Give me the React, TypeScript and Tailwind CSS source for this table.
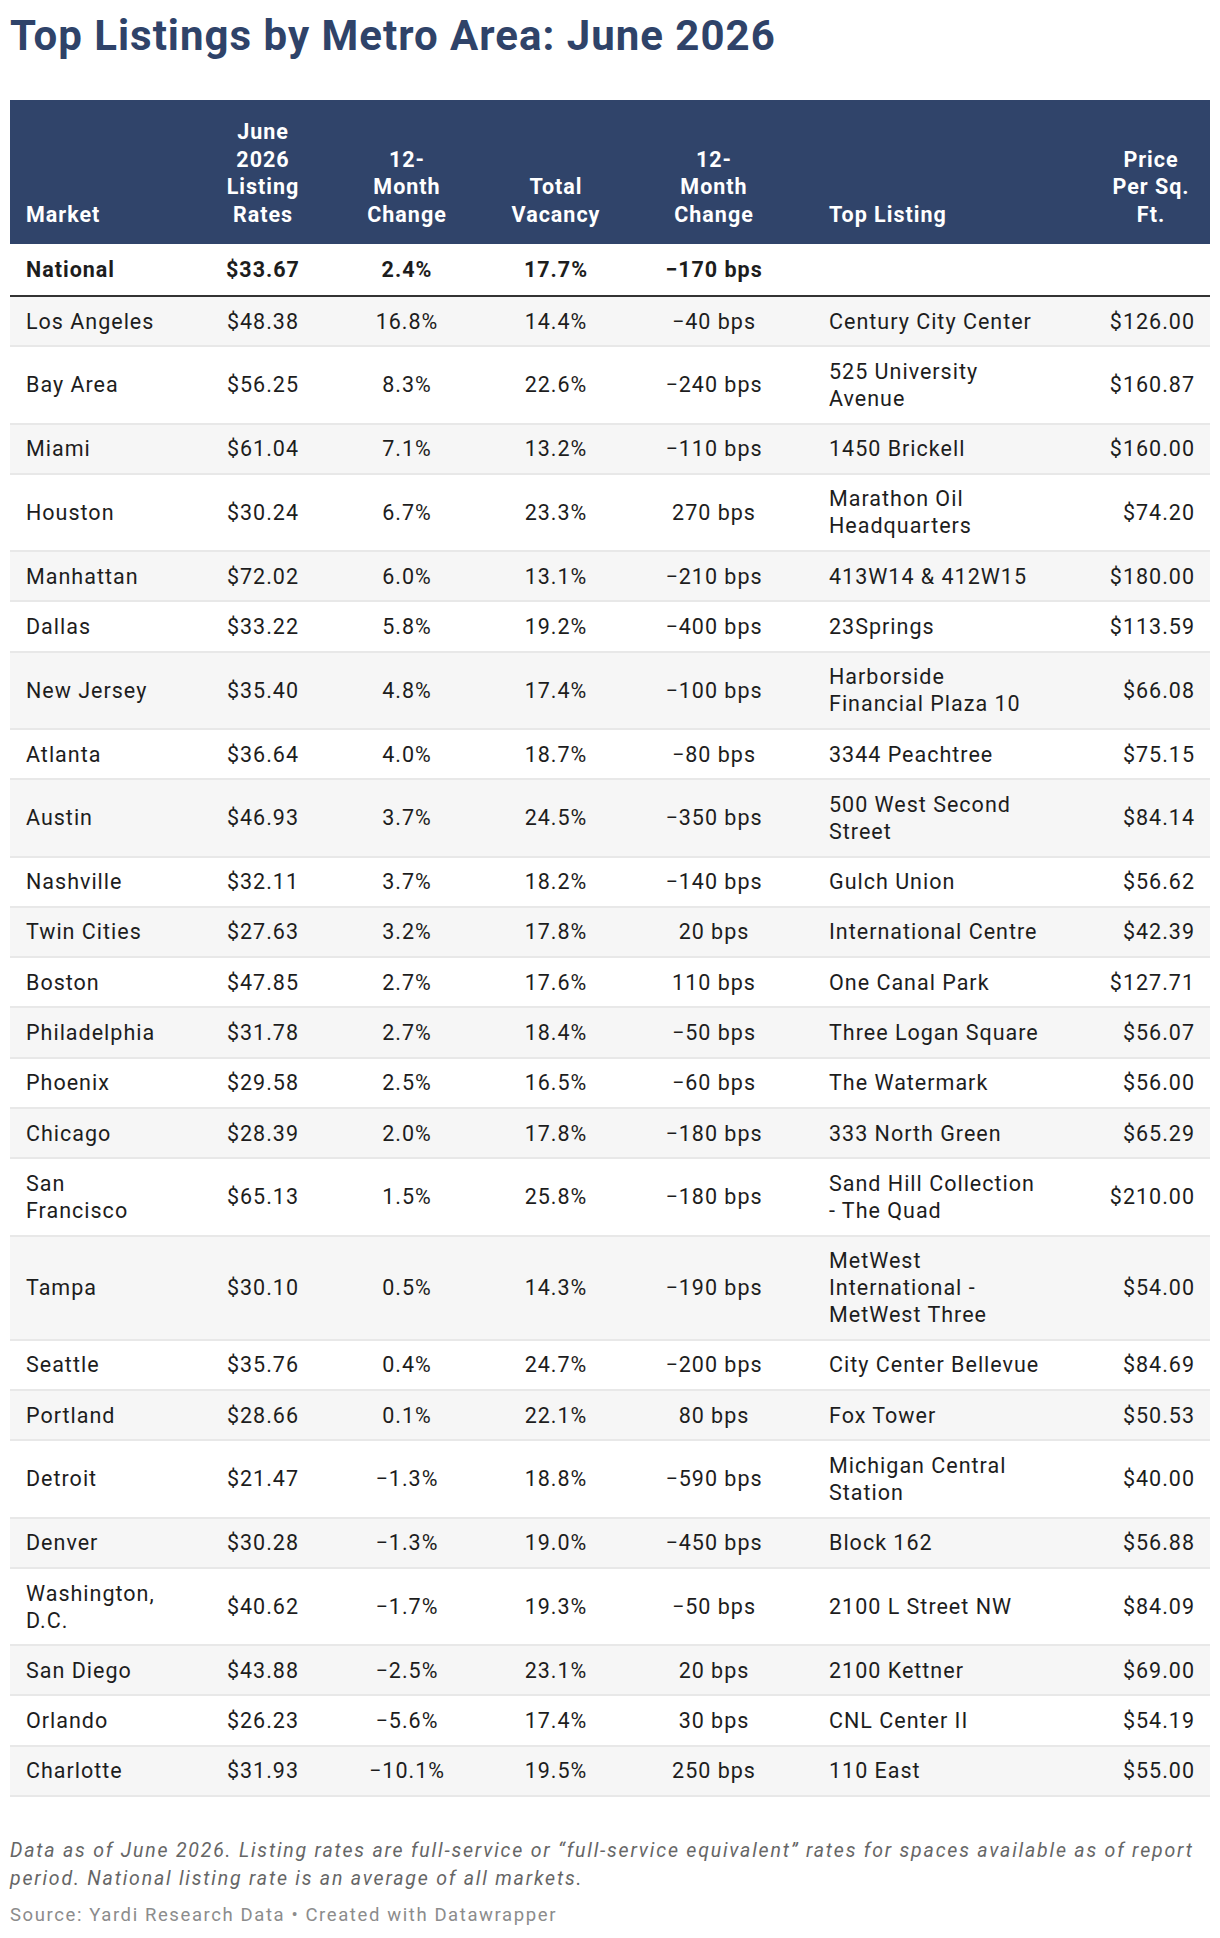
const ROWS: [string[], string, string, string, string, string[], string][] = [
  [["Los Angeles"], "$48.38", "16.8%", "14.4%", "−40 bps", ["Century City Center"], "$126.00"],
  [["Bay Area"], "$56.25", "8.3%", "22.6%", "−240 bps", ["525 University", "Avenue"], "$160.87"],
  [["Miami"], "$61.04", "7.1%", "13.2%", "−110 bps", ["1450 Brickell"], "$160.00"],
  [["Houston"], "$30.24", "6.7%", "23.3%", "270 bps", ["Marathon Oil", "Headquarters"], "$74.20"],
  [["Manhattan"], "$72.02", "6.0%", "13.1%", "−210 bps", ["413W14 & 412W15"], "$180.00"],
  [["Dallas"], "$33.22", "5.8%", "19.2%", "−400 bps", ["23Springs"], "$113.59"],
  [["New Jersey"], "$35.40", "4.8%", "17.4%", "−100 bps", ["Harborside", "Financial Plaza 10"], "$66.08"],
  [["Atlanta"], "$36.64", "4.0%", "18.7%", "−80 bps", ["3344 Peachtree"], "$75.15"],
  [["Austin"], "$46.93", "3.7%", "24.5%", "−350 bps", ["500 West Second", "Street"], "$84.14"],
  [["Nashville"], "$32.11", "3.7%", "18.2%", "−140 bps", ["Gulch Union"], "$56.62"],
  [["Twin Cities"], "$27.63", "3.2%", "17.8%", "20 bps", ["International Centre"], "$42.39"],
  [["Boston"], "$47.85", "2.7%", "17.6%", "110 bps", ["One Canal Park"], "$127.71"],
  [["Philadelphia"], "$31.78", "2.7%", "18.4%", "−50 bps", ["Three Logan Square"], "$56.07"],
  [["Phoenix"], "$29.58", "2.5%", "16.5%", "−60 bps", ["The Watermark"], "$56.00"],
  [["Chicago"], "$28.39", "2.0%", "17.8%", "−180 bps", ["333 North Green"], "$65.29"],
  [["San", "Francisco"], "$65.13", "1.5%", "25.8%", "−180 bps", ["Sand Hill Collection", "- The Quad"], "$210.00"],
  [["Tampa"], "$30.10", "0.5%", "14.3%", "−190 bps", ["MetWest", "International -", "MetWest Three"], "$54.00"],
  [["Seattle"], "$35.76", "0.4%", "24.7%", "−200 bps", ["City Center Bellevue"], "$84.69"],
  [["Portland"], "$28.66", "0.1%", "22.1%", "80 bps", ["Fox Tower"], "$50.53"],
  [["Detroit"], "$21.47", "−1.3%", "18.8%", "−590 bps", ["Michigan Central", "Station"], "$40.00"],
  [["Denver"], "$30.28", "−1.3%", "19.0%", "−450 bps", ["Block 162"], "$56.88"],
  [["Washington,", "D.C."], "$40.62", "−1.7%", "19.3%", "−50 bps", ["2100 L Street NW"], "$84.09"],
  [["San Diego"], "$43.88", "−2.5%", "23.1%", "20 bps", ["2100 Kettner"], "$69.00"],
  [["Orlando"], "$26.23", "−5.6%", "17.4%", "30 bps", ["CNL Center II"], "$54.19"],
  [["Charlotte"], "$31.93", "−10.1%", "19.5%", "250 bps", ["110 East"], "$55.00"],
];

function Lines({ lines }: { lines: string[] }) {
  return (
    <>
      {lines.map((l, i) => (
        <span key={i} className="block whitespace-nowrap">
          {l}
        </span>
      ))}
    </>
  );
}

export default function App() {
  return (
    <div className="w-[1220px] bg-white px-[10px] pt-[8px] font-['Roboto',sans-serif] text-[#1d1d1d]">
      <h1 className="text-[42px] font-bold leading-[56px] tracking-[1px] text-[#2f4369]">
        Top Listings by Metro Area: June 2026
      </h1>

      <table className="mt-[36px] w-[1200px] table-fixed border-collapse text-[21.5px] leading-[27px] tracking-[1px]">
        <colgroup>
          <col className="w-[190px]" />
          <col className="w-[126px]" />
          <col className="w-[162px]" />
          <col className="w-[136px]" />
          <col className="w-[180px]" />
          <col className="w-[288px]" />
          <col className="w-[118px]" />
        </colgroup>
        <thead>
          <tr className="bg-[#30446a] align-bottom font-bold leading-[27.5px] text-white">
            <th className="px-4 pt-[18px] pb-[16px] text-left">Market</th>
            <th className="px-2 pt-[18px] pb-[16px] text-center">
              <Lines lines={["June", "2026", "Listing", "Rates"]} />
            </th>
            <th className="px-2 pt-[18px] pb-[16px] text-center">
              <Lines lines={["12-", "Month", "Change"]} />
            </th>
            <th className="px-2 pt-[18px] pb-[16px] text-center">
              <Lines lines={["Total", "Vacancy"]} />
            </th>
            <th className="px-2 pt-[18px] pb-[16px] text-center">
              <Lines lines={["12-", "Month", "Change"]} />
            </th>
            <th className="pt-[18px] pb-[16px] pl-[25px] pr-2 text-left">Top Listing</th>
            <th className="px-2 pt-[18px] pb-[16px] text-center">
              <Lines lines={["Price", "Per Sq.", "Ft."]} />
            </th>
          </tr>
        </thead>
        <tbody>
          <tr className="border-b-2 border-[#333333] font-bold">
            <td className="px-4 py-[12px]">National</td>
            <td className="px-2 py-[12px] text-center">$33.67</td>
            <td className="px-2 py-[12px] text-center">2.4%</td>
            <td className="px-2 py-[12px] text-center">17.7%</td>
            <td className="px-2 py-[12px] text-center">−170 bps</td>
            <td className="py-[12px] pl-[25px]"></td>
            <td className="px-4 py-[12px]"></td>
          </tr>
          {ROWS.map((r, i) => (
            <tr
              key={r[0].join(" ")}
              className={
                "border-b-2 border-[#e8e8e8] align-middle " + (i % 2 === 0 ? "bg-[#f6f6f6]" : "bg-white")
              }
            >
              <td className="px-4 py-[10.65px]">
                <Lines lines={r[0]} />
              </td>
              <td className="px-2 py-[10.65px] text-center">{r[1]}</td>
              <td className="px-2 py-[10.65px] text-center">{r[2]}</td>
              <td className="px-2 py-[10.65px] text-center">{r[3]}</td>
              <td className="px-2 py-[10.65px] text-center">{r[4]}</td>
              <td className="py-[10.65px] pl-[25px] pr-2">
                <Lines lines={r[5]} />
              </td>
              <td className="py-[10.65px] pl-2 pr-[15px] text-right">{r[6]}</td>
            </tr>
          ))}
        </tbody>
      </table>

      <div className="pt-[40px] pb-[10px]">
        <p className="text-[19.5px] italic leading-[28px] tracking-[1.8px] text-[#666666]">
          Data as of June 2026. Listing rates are full-service or “full-service equivalent” rates for spaces
          available as of report period. National listing rate is an average of all markets.
        </p>
        <p className="mt-[8px] text-[18.5px] leading-[28px] tracking-[1.6px] text-[#8c8c8c]">
          Source: Yardi Research Data • Created with Datawrapper
        </p>
      </div>
    </div>
  );
}
